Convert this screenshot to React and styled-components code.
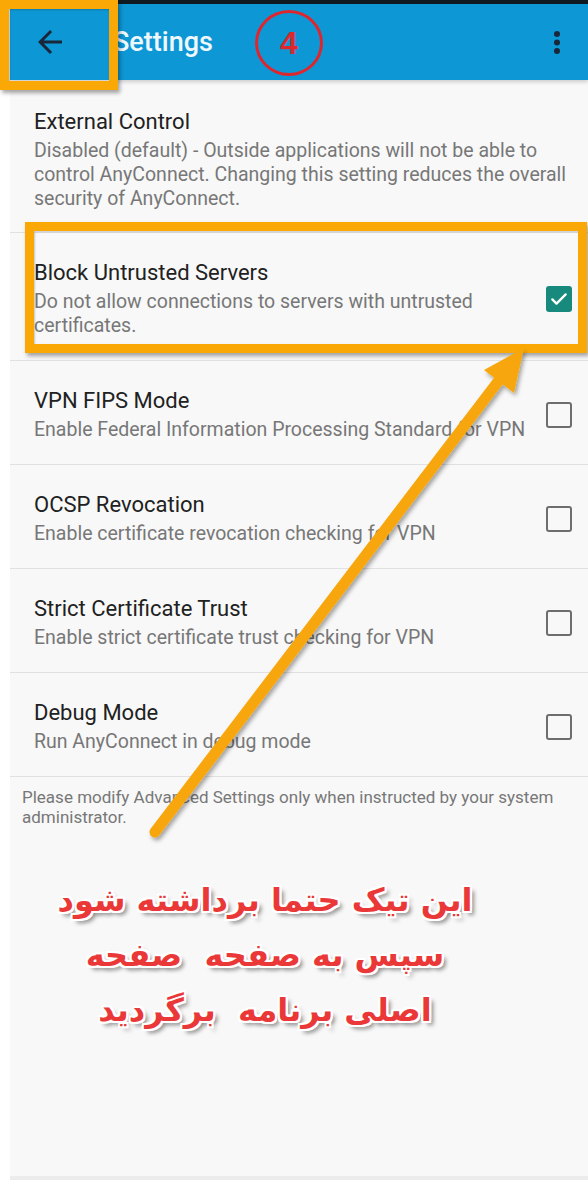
import React from "react";
import styled, { createGlobalStyle } from "styled-components";

const Global = createGlobalStyle`
  html, body { margin: 0; padding: 0; background: #ffffff; }
  body { font-family: Roboto, "Noto Sans", Arial, sans-serif; }
`;

const Root = styled.div`
  position: relative;
  width: 588px;
  height: 1180px;
  overflow: hidden;
  background: #ffffff;
`;

const Screen = styled.div`
  margin-left: 10px;
  height: 100%;
  background: #f8f8f8;
  display: flex;
  flex-direction: column;
`;

const StatusStrip = styled.div`
  flex: none;
  height: 4px;
  background: #0f1a22;
`;

const AppBar = styled.header`
  position: relative;
  z-index: 1;
  flex: none;
  height: 76px;
  display: flex;
  align-items: center;
  padding: 0 13px 0 22px;
  background: #0e97d5;
  box-shadow: 0 2px 4px rgba(0, 0, 0, 0.18);
`;

const IconButton = styled.div`
  flex: none;
  width: 36px;
  height: 36px;
  display: flex;
  align-items: center;
  justify-content: center;
  color: #18283a;
`;

const BarTitle = styled.h1`
  flex: 1;
  margin: 0 0 0 45px;
  font-size: 27px;
  font-weight: 500;
  color: #eef8fd;
  letter-spacing: 0;
`;

const List = styled.div`
  display: flex;
  flex-direction: column;
`;

const Row = styled.div`
  display: flex;
  align-items: center;
  gap: 10px;
  padding: ${(p) => (p.$lead ? "28px 16px 21px 24px" : "26px 16px 22px 24px")};
  border-bottom: 1px solid #e1e1e1;
`;

const RowText = styled.div`
  flex: 1;
  min-width: 0;
`;

const RowTitle = styled.div`
  font-size: 22px;
  line-height: 28px;
  color: #212121;
`;

const RowDesc = styled.div`
  margin-top: 3px;
  font-size: 19.5px;
  line-height: 24px;
  color: #777777;
`;

const Box = styled.div`
  flex: none;
  width: 26px;
  height: 26px;
  box-sizing: border-box;
  border-radius: 3px;
  border: ${(p) => (p.$checked ? "none" : "2.5px solid #6e6e6e")};
  background: ${(p) => (p.$checked ? "#188a7d" : "transparent")};
  display: flex;
  align-items: center;
  justify-content: center;
`;

const Note = styled.p`
  margin: 0;
  padding: 10px 16px 0 12px;
  font-size: 17px;
  line-height: 20px;
  color: #777777;
`;

const Callout = styled.div`
  margin-top: 46px;
  padding-right: 68px;
  text-align: center;
  direction: rtl;
  font-family: "DejaVu Sans", "Noto Sans", sans-serif;
  font-weight: bold;
  font-size: 32px;
  line-height: 55px;
  color: #ea3838;
  text-shadow:
    -2px -2px 0 #fff, 2px -2px 0 #fff, -2px 2px 0 #fff, 2px 2px 0 #fff,
    0 -2px 0 #fff, 0 2px 0 #fff, -2px 0 0 #fff, 2px 0 0 #fff,
    4px 4px 4px rgba(0, 0, 0, 0.45);
`;

const CalloutLine = styled.div`
  white-space: pre;
`;

const BottomStrip = styled.div`
  margin-top: auto;
  flex: none;
  height: 4px;
  background: #ececec;
`;

const Highlight = styled.div`
  position: absolute;
  left: ${(p) => p.$x}px;
  top: ${(p) => p.$y}px;
  width: ${(p) => p.$w}px;
  height: ${(p) => p.$h}px;
  box-sizing: border-box;
  border: 9px solid #f9a806;
  box-shadow: 2px 3px 4px rgba(0, 0, 0, 0.35), inset 1px 1px 2px rgba(0, 0, 0, 0.2);
  z-index: 3;
  pointer-events: none;
`;

const StepBadge = styled.div`
  position: absolute;
  left: 255px;
  top: 10px;
  width: 68px;
  height: 66px;
  box-sizing: border-box;
  border: 3.5px solid #e0262d;
  border-radius: 50%;
  display: flex;
  align-items: center;
  justify-content: center;
  font-family: "Liberation Sans", Arial, sans-serif;
  font-weight: bold;
  font-size: 32px;
  color: #e0262d;
  z-index: 3;
`;

const ArrowLayer = styled.svg`
  position: absolute;
  left: 0;
  top: 0;
  z-index: 4;
  pointer-events: none;
`;

const rows = [
  {
    title: "Block Untrusted Servers",
    desc: "Do not allow connections to servers with untrusted certificates.",
    checked: true,
  },
  {
    title: "VPN FIPS Mode",
    desc: "Enable Federal Information Processing Standard for VPN",
    checked: false,
  },
  {
    title: "OCSP Revocation",
    desc: "Enable certificate revocation checking for VPN",
    checked: false,
  },
  {
    title: "Strict Certificate Trust",
    desc: "Enable strict certificate trust checking for VPN",
    checked: false,
  },
  {
    title: "Debug Mode",
    desc: "Run AnyConnect in debug mode",
    checked: false,
  },
];

function Checkbox({ checked }) {
  return (
    <Box $checked={checked}>
      {checked && (
        <svg width="20" height="20" viewBox="0 0 24 24">
          <path d="M4 12.5l5 5L20 6.5" fill="none" stroke="#fff" strokeWidth="2.8" strokeLinecap="round" strokeLinejoin="round" />
        </svg>
      )}
    </Box>
  );
}

export default function App() {
  return (
    <>
      <Global />
      <Root>
        <Screen>
          <StatusStrip />
          <AppBar>
            <IconButton>
              <svg width="36" height="36" viewBox="0 0 24 24">
                <path fill="currentColor" d="M20 11H7.83l5.59-5.59L12 4l-8 8 8 8 1.41-1.41L7.83 13H20v-2z" />
              </svg>
            </IconButton>
            <BarTitle>Settings</BarTitle>
            <IconButton>
              <svg width="36" height="36" viewBox="0 0 36 36">
                <circle cx="18" cy="10" r="3" fill="currentColor" />
                <circle cx="18" cy="18.5" r="3" fill="currentColor" />
                <circle cx="18" cy="27" r="3" fill="currentColor" />
              </svg>
            </IconButton>
          </AppBar>
          <List>
            <Row $lead>
              <RowText>
                <RowTitle>External Control</RowTitle>
                <RowDesc>
                  Disabled (default) - Outside applications will not be able to control AnyConnect. Changing this setting reduces the overall security of AnyConnect.
                </RowDesc>
              </RowText>
            </Row>
            {rows.map((r) => (
              <Row key={r.title}>
                <RowText>
                  <RowTitle>{r.title}</RowTitle>
                  <RowDesc>{r.desc}</RowDesc>
                </RowText>
                <Checkbox checked={r.checked} />
              </Row>
            ))}
          </List>
          <Note>Please modify Advanced Settings only when instructed by your system administrator.</Note>
          <Callout>
            <CalloutLine>این تیک حتما برداشته شود</CalloutLine>
            <CalloutLine>سپس به صفحه  صفحه</CalloutLine>
            <CalloutLine>اصلی برنامه  برگردید</CalloutLine>
          </Callout>
          <BottomStrip />
        </Screen>

        <Highlight $x={0} $y={0} $w={118} $h={90} />
        <Highlight $x={25} $y={222} $w={562} $h={131} />
        <StepBadge>4</StepBadge>

        <ArrowLayer width="588" height="1180" viewBox="0 0 588 1180">
          <defs>
            <filter id="sh" x="-20%" y="-20%" width="140%" height="140%">
              <feDropShadow dx="2" dy="3" stdDeviation="2" floodColor="#000" floodOpacity="0.35" />
            </filter>
          </defs>
          <g filter="url(#sh)">
            <line x1="155" y1="832" x2="500" y2="379" stroke="#f7a70a" strokeWidth="11" strokeLinecap="round" />
            <polygon points="524,348 514,393 484,370" fill="#f7a70a" />
          </g>
        </ArrowLayer>
      </Root>
    </>
  );
}
